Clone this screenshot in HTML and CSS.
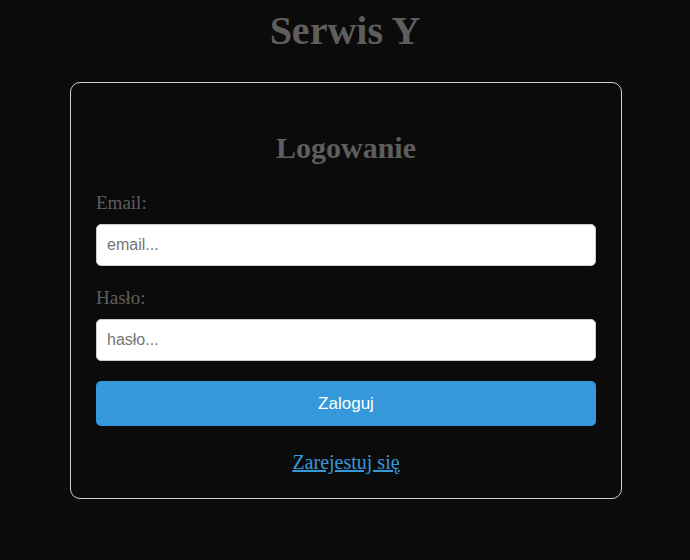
FILE: index.html
```html
<!DOCTYPE html>
<html lang="pl">
<head>
<meta charset="utf-8">
<title>Serwis Y</title>
<link rel="stylesheet" href="styles.css">
</head>
<body>
<h1 class="site-title">Serwis Y</h1>
<div class="card">
  <h2 class="card-title">Logowanie</h2>
  <form class="form">
    <label class="label" for="email">Email:</label>
    <input class="input" id="email" type="text" placeholder="email...">
    <label class="label" for="haslo">Hasło:</label>
    <input class="input" id="haslo" type="password" placeholder="hasło...">
    <button class="btn" type="button">Zaloguj</button>
  </form>
  <p class="register"><a href="#" class="link">Zarejestuj się</a></p>
</div>
</body>
</html>
```

FILE: styles.css
```css
html, body {
  margin: 0;
  padding: 0;
  background: #0b0b0b;
}
body {
  font-family: "Liberation Serif", "Times New Roman", serif;
  color: #5e5e5e;
}
.site-title {
  margin: 8px 0 28px;
  text-align: center;
  font-size: 40px;
  font-weight: bold;
  line-height: 46px;
  color: #5e5e5e;
}
.card {
  width: 500px;
  margin: 0 0 0 calc(50% - 275px);
  padding: 25px 25px 24px;
  border: 1px solid #cfcfcf;
  border-radius: 10px;
}
.card-title {
  margin: 23px 0 27px;
  text-align: center;
  font-size: 30px;
  line-height: 34px;
  font-weight: bold;
  color: #5e5e5e;
}
.form {
  display: flex;
  flex-direction: column;
}
.label {
  display: block;
  font-size: 19px;
  line-height: 22px;
  margin-bottom: 10px;
  color: #5e5e5e;
}
.input {
  box-sizing: border-box;
  width: 100%;
  height: 42px;
  padding: 10px;
  margin: 0 0 21px;
  border: 1px solid #cccccc;
  border-radius: 5px;
  background: #ffffff;
  font-family: "Liberation Sans", Arial, sans-serif;
  font-size: 16px;
  color: #333;
}
.input::placeholder {
  color: #757575;
}
.input:last-of-type {
  margin-bottom: 20px;
}
.btn {
  height: 45px;
  width: 100%;
  border: none;
  border-radius: 5px;
  background: #3498db;
  color: #ffffff;
  font-family: "Liberation Sans", Arial, sans-serif;
  font-size: 17px;
}
.register {
  margin: 25px 0 0;
  text-align: center;
  font-size: 20px;
  line-height: 23px;
}
.link {
  color: #3498db;
  text-decoration: underline;
}
```
